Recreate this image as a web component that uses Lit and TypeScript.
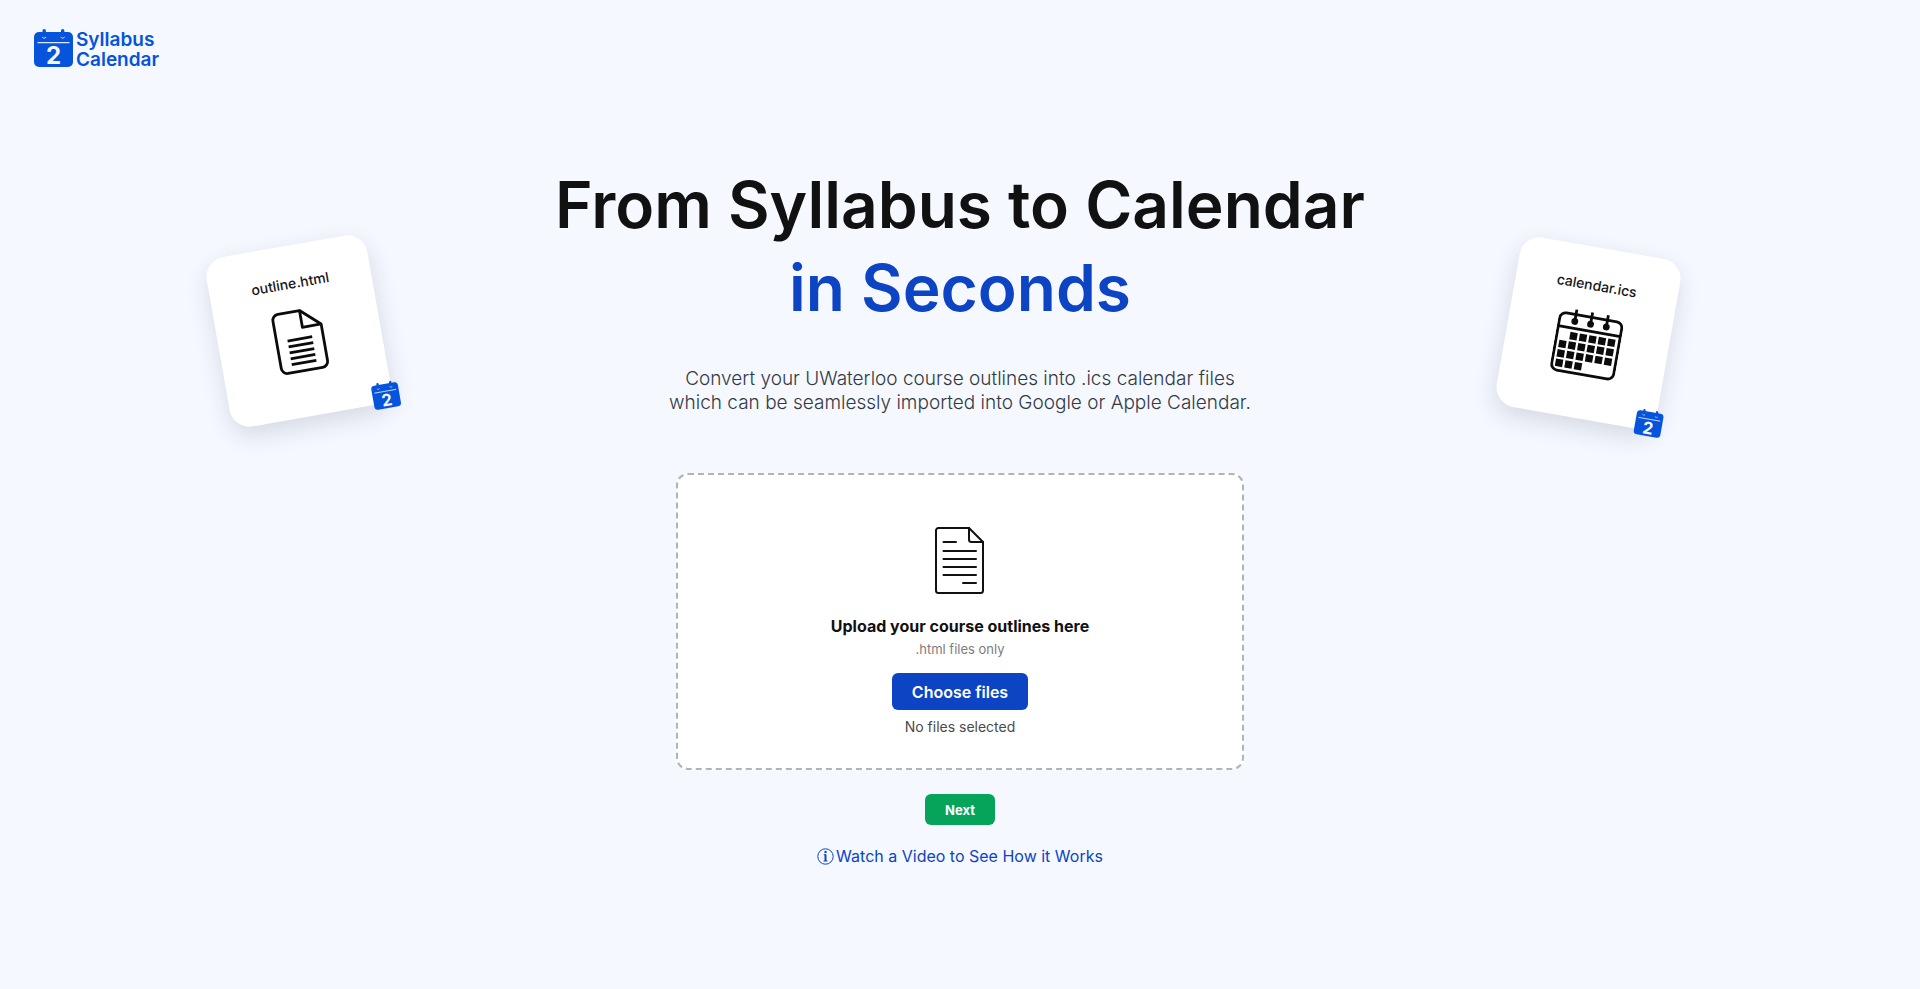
import { LitElement, html, css, svg } from "lit";
import { customElement, state } from "lit/decorators.js";

/** Brand mark: a tear-off calendar page showing the digit 2. */
@customElement("calendar-mark")
export class CalendarMark extends LitElement {
  static styles = css`
    :host { display: block; }
    .mark { display: block; width: 100%; height: auto; overflow: visible; }
    .digit { font: 700 24px Inter, "Liberation Sans", sans-serif; fill: #f5f8ff; }
  `;
  render() {
    return html`<svg class="mark" viewBox="0 0 39 38" aria-hidden="true">
      <rect x="0" y="3" width="39" height="35" rx="5" fill="#0653dc" />
      <rect x="8.5" y="0" width="3.4" height="8" rx="1.7" fill="#0653dc" />
      <rect x="27" y="0" width="3.4" height="8" rx="1.7" fill="#0653dc" />
      <path d="M8.2 8.2q2 2.2 4 0M26.7 8.2q2 2.2 4 0" fill="none" stroke="#c9dafb" stroke-width="1" />
      <path d="M3.5 13.6h32" stroke="#dbe7ff" stroke-width="1.2" />
      <text class="digit" x="19.5" y="35" text-anchor="middle">2</text>
    </svg>`;
  }
}

/** Floating sheet that shows a file name, its icon and the brand mark on a corner. */
@customElement("file-card")
export class FileCard extends LitElement {
  static properties = { name: { type: String }, kind: { type: String } };
  declare name: string;
  declare kind: string;

  static styles = css`
    :host { display: block; }
    .card {
      position: relative;
      display: flex;
      flex-direction: column;
      align-items: center;
      gap: 17px;
      box-sizing: border-box;
      width: 163px;
      height: 172px;
      padding-top: 29px;
      border-radius: 20px;
      background: #fff;
      box-shadow: 0 9px 24px rgba(25, 32, 55, 0.14);
    }
    .name { font-size: 14px; line-height: 18px; font-weight: 500; color: #161616; }
    .icon { display: block; }
    .badge { position: absolute; right: -7px; bottom: -5px; width: 27px; }
  `;

  private outline() {
    return svg`
      <path d="M9 2h22l19 17v37a6 6 0 0 1-6 6H9a6 6 0 0 1-6-6V8a6 6 0 0 1 6-6z" />
      <path d="M31 2v17h19" />
      <path d="M14 30h25M14 36h25M14 42h25M14 48h25M14 54h25" />`;
  }

  private calendar() {
    const cells = [];
    for (let row = 0; row < 4; row++) {
      for (let col = 0; col < 6; col++) {
        if ((row === 0 && col === 0) || (row === 3 && col > 2)) continue;
        cells.push(svg`<rect x=${5 + col * 9.6} y=${24 + row * 9.6} width="7.4" height="7.4" fill="#0b0b0b" stroke="none" />`);
      }
    }
    return svg`
      <rect x="1.5" y="6" width="63" height="58" rx="6" />
      <path d="M1.5 20h63M17 1v13M33 1v13M49 1v13" />
      <circle cx="17" cy="13" r="2" /><circle cx="33" cy="13" r="2" /><circle cx="49" cy="13" r="2" />
      ${cells}`;
  }

  render() {
    const cal = this.kind === "calendar";
    return html`<div class="card">
      <span class="name">${this.name}</span>
      <svg class="icon" width=${cal ? 66 : 53} height=${cal ? 66 : 64} viewBox=${cal ? "0 0 66 66" : "0 0 53 64"}
        fill="none" stroke="#0b0b0b" stroke-width="2.8" stroke-linejoin="round" aria-hidden="true">
        ${cal ? this.calendar() : this.outline()}
      </svg>
      <calendar-mark class="badge"></calendar-mark>
    </div>`;
  }
}

@customElement("app-root")
export class AppRoot extends LitElement {
  @state() private count = 0;

  static styles = css`
    :host {
      display: block;
      box-sizing: border-box;
      min-height: 100vh;
      background: #f5f8ff;
      color: #111;
      font-family: Inter, "Liberation Sans", sans-serif;
      overflow: hidden;
    }
    .header { display: flex; padding: 29px 34px 0; }
    .brand { display: flex; align-items: flex-start; gap: 3px; color: #0653dc; text-decoration: none; }
    .brand-mark { width: 39px; }
    .brand-name { padding-top: 1px; font-size: 19px; line-height: 20px; font-weight: 600; }
    .hero {
      display: grid;
      grid-template-columns: minmax(0, 1fr) auto minmax(0, 1fr);
      padding-top: 93px;
    }
    .left { justify-self: start; padding: 82px 0 0 11.3vw; }
    .right { justify-self: end; padding: 84px 13vw 0 0; }
    .tilt-left { transform: rotate(-10deg); }
    .tilt-right { transform: rotate(10deg); }
    .main { display: flex; flex-direction: column; align-items: center; text-align: center; }
    .title { margin: 0; font-size: 64px; line-height: 83px; font-weight: 600; }
    .accent { display: block; color: #0c44c3; }
    .lead { margin: 38px 0 0; font-size: 19px; line-height: 24px; font-weight: 300; color: #333845; }
    .line { display: block; }
    .drop {
      display: flex;
      flex-direction: column;
      align-items: center;
      box-sizing: border-box;
      width: 568px;
      max-width: 100%;
      margin-top: 58px;
      padding: 52px 24px 31px;
      border: 2px dashed #b3b3b3;
      border-radius: 12px;
      background: #fff;
    }
    .drop-title { margin: 20px 0 0; font-size: 16px; line-height: 24px; font-weight: 700; }
    .hint { margin: 0 0 13px; font-size: 13px; line-height: 22px; color: #7d7d7d; }
    .btn { border: 0; padding: 0 20px; border-radius: 6px; font-family: inherit; color: #fff; cursor: pointer; }
    .choose { height: 37px; font-size: 16px; font-weight: 600; background: #0c44c3; }
    .next { height: 31px; margin-top: 24px; font-size: 13px; font-weight: 700; background: #06a45b; }
    .status { margin: 7px 0 0; font-size: 14px; line-height: 20px; color: #4a4a4a; }
    .video { display: flex; align-items: center; gap: 2px; margin-top: 19px; font-size: 16px; line-height: 24px; color: #0c44c3; text-decoration: none; }
  `;

  private pick() {
    this.renderRoot.querySelector<HTMLInputElement>("#files")!.click();
  }

  private changed(e: Event) {
    this.count = (e.target as HTMLInputElement).files?.length ?? 0;
  }

  render() {
    return html`
      <header class="header">
        <a class="brand" href="#">
          <calendar-mark class="brand-mark"></calendar-mark>
          <span class="brand-name">Syllabus<br />Calendar</span>
        </a>
      </header>
      <div class="hero">
        <div class="left"><file-card class="tilt-left" name="outline.html" kind="outline"></file-card></div>
        <main class="main">
          <h1 class="title">From Syllabus to Calendar <span class="accent">in Seconds</span></h1>
          <p class="lead">
            <span class="line">Convert your UWaterloo course outlines into .ics calendar files</span>
            <span class="line">which can be seamlessly imported into Google or Apple Calendar.</span>
          </p>
          <section class="drop">
            <svg width="50" height="67" viewBox="0 0 50 67" fill="none" stroke="#111" stroke-width="2" stroke-linejoin="round" stroke-linecap="round" aria-hidden="true">
              <path d="M3.5 1H34l14 14v48.5a2.5 2.5 0 0 1-2.5 2.5h-42A2.5 2.5 0 0 1 1 63.5v-60A2.5 2.5 0 0 1 3.5 1z" />
              <path d="M34 1v11.5a2.5 2.5 0 0 0 2.5 2.5H48" />
              <path d="M8.5 15H21M8.5 24H41M8.5 32H41M8.5 40H41M8.5 48H41M28 56h13" />
            </svg>
            <h2 class="drop-title">Upload your course outlines here</h2>
            <p class="hint">.html files only</p>
            <input id="files" type="file" accept=".html" multiple hidden aria-label="Choose files" @change=${this.changed} />
            <button class="btn choose" type="button" @click=${this.pick}>Choose files</button>
            <p class="status">${this.count ? `${this.count} selected` : "No files selected"}</p>
          </section>
          <button class="btn next" type="button">Next</button>
          <a class="video" href="#">
            <svg width="17" height="17" viewBox="0 0 17 17" fill="none" stroke="#0c44c3" aria-hidden="true">
              <circle cx="8.5" cy="8.5" r="7.7" />
              <path d="M8.5 6.5V13" stroke-width="2" />
              <path d="M6.8 6.7h2M6.5 13h4" />
              <circle cx="8.5" cy="4" r="1.2" fill="#0c44c3" stroke="none" />
            </svg>
            Watch a Video to See How it Works
          </a>
        </main>
        <div class="right"><file-card class="tilt-right" name="calendar.ics" kind="calendar"></file-card></div>
      </div>
    `;
  }
}
